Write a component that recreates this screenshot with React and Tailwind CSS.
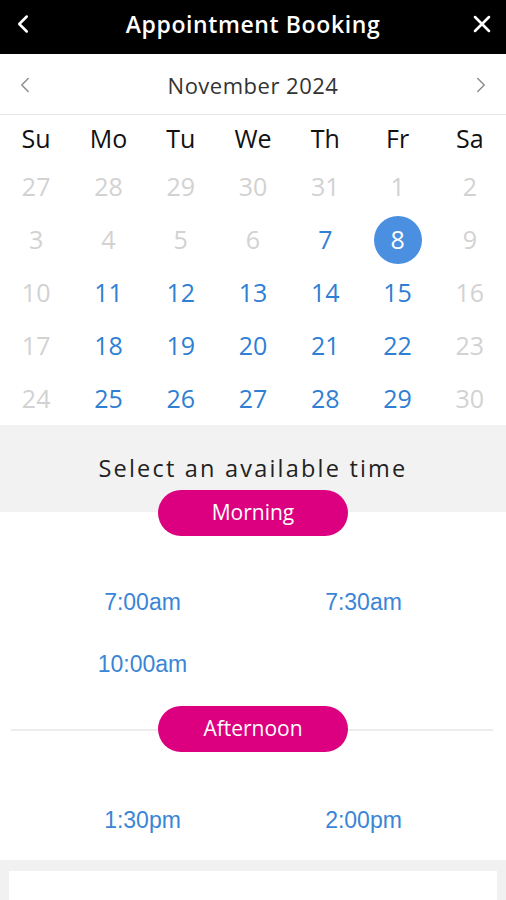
import { ChevronLeft, ChevronRight, X } from "lucide-react";

const DAYS = ["Su", "Mo", "Tu", "We", "Th", "Fr", "Sa"];

const WEEKS = [
  [["27", 0], ["28", 0], ["29", 0], ["30", 0], ["31", 0], ["1", 0], ["2", 0]],
  [["3", 0], ["4", 0], ["5", 0], ["6", 0], ["7", 1], ["8", 2], ["9", 0]],
  [["10", 0], ["11", 1], ["12", 1], ["13", 1], ["14", 1], ["15", 1], ["16", 0]],
  [["17", 0], ["18", 1], ["19", 1], ["20", 1], ["21", 1], ["22", 1], ["23", 0]],
  [["24", 0], ["25", 1], ["26", 1], ["27", 1], ["28", 1], ["29", 1], ["30", 0]],
];

function Pill({ label }) {
  return (
    <div className="w-[190px] h-[46px] rounded-full bg-[#dc0080] text-white flex items-center justify-center text-[21px] font-['Open_Sans',sans-serif]">
      {label}
    </div>
  );
}

function Slots({ items }) {
  return (
    <div className="grid grid-cols-2 px-[32px] gap-y-[22px] font-['Liberation_Sans',Arial,sans-serif] text-[23px] text-[#3a85d6]">
      {items.map((t) => (
        <div key={t} className="text-center h-[40px] leading-[44px]">
          {t}
        </div>
      ))}
    </div>
  );
}

export default function App() {
  return (
    <div className="w-[506px] h-[900px] overflow-hidden bg-white font-['Open_Sans',sans-serif]">
      <header className="h-[54px] bg-black flex items-center justify-between px-[8px] pb-[6px] text-white">
        <ChevronLeft size={30} strokeWidth={2} />
        <h1 className="text-[23px] font-semibold tracking-[0.6px] font-['Open_Sans',sans-serif]">Appointment Booking</h1>
        <X size={28} strokeWidth={2.2} className="mr-[2px]" />
      </header>

      <div className="h-[61px] flex items-center justify-between px-[12px] pt-[2px] border-b border-[#e6e6e6]">
        <ChevronLeft size={26} strokeWidth={1.3} className="text-[#8a8a8a]" />
        <span className="text-[22px] tracking-[0.5px] text-[#333]">November 2024</span>
        <ChevronRight size={26} strokeWidth={1.3} className="text-[#8a8a8a]" />
      </div>

      <div className="grid grid-cols-7 h-[45px] pt-[3px] items-center text-[25px] text-[#111]">
        {DAYS.map((d) => (
          <div key={d} className="text-center">{d}</div>
        ))}
      </div>

      {WEEKS.map((w, i) => (
        <div key={i} className="grid grid-cols-7 h-[53px] items-center text-[25px]">
          {w.map(([n, s], j) => (
            <div key={j} className="flex justify-center">
              {s === 2 ? (
                <span className="w-[48px] h-[48px] rounded-full bg-[#4a8fe0] text-white flex items-center justify-center">{n}</span>
              ) : (
                <span className={s === 1 ? "text-[#2f7fd3]" : "text-[#d2d2d2]"}>{n}</span>
              )}
            </div>
          ))}
        </div>
      ))}

      <div className="bg-[#f2f2f2] h-[87px] relative">
        <div className="pt-[26px] text-center text-[23.5px] tracking-[2.2px] text-[#222]">Select an available time</div>
        <div className="absolute left-0 right-0 top-[65px] flex justify-center">
          <Pill label="Morning" />
        </div>
      </div>

      <div className="pt-[68px]">
        <Slots items={["7:00am", "7:30am", "10:00am"]} />
      </div>

      <div className="relative mt-[24px] h-[46px] flex items-center justify-center">
        <div className="absolute left-[11px] right-[13px] top-[23px] h-[2px] bg-[#ececec]" />
        <div className="relative">
          <Pill label="Afternoon" />
        </div>
      </div>

      <div className="pt-[46px]">
        <Slots items={["1:30pm", "2:00pm"]} />
      </div>

      <div className="mt-[22px] bg-[#f1f1f1] h-[60px] px-[9px] pt-[11px]">
        <div className="bg-white h-full" />
      </div>
    </div>
  );
}
